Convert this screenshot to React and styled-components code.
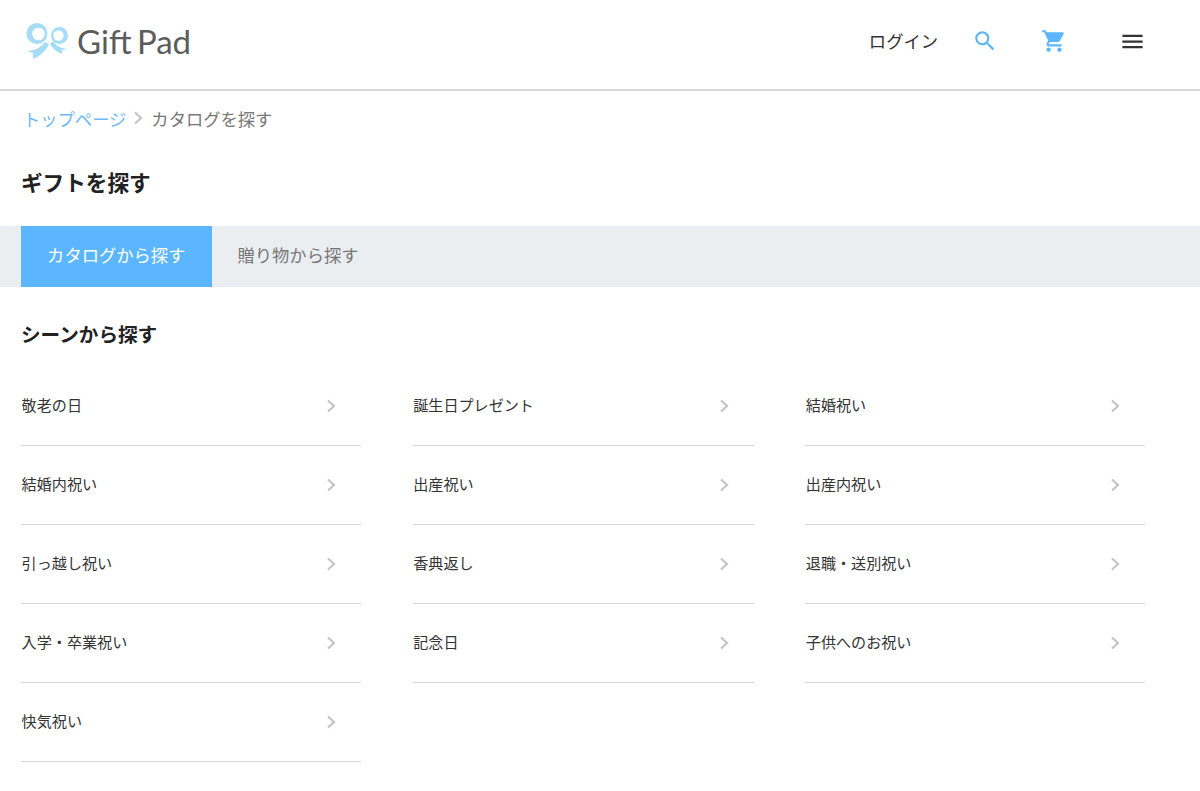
import React from 'react';
import styled, { createGlobalStyle } from 'styled-components';

const GlobalStyle = createGlobalStyle`
  html, body { margin: 0; padding: 0; background: #fff; }
  body { font-family: "Noto Sans CJK JP", "Liberation Sans", sans-serif; color: #333; }
`;

const scenes = [
  '敬老の日', '誕生日プレゼント', '結婚祝い',
  '結婚内祝い', '出産祝い', '出産内祝い',
  '引っ越し祝い', '香典返し', '退職・送別祝い',
  '入学・卒業祝い', '記念日', '子供へのお祝い',
  '快気祝い',
];

const Logo = () => (
  <LogoWrap>
    <svg width="44" height="38" viewBox="26 22 44 38" fill="#a5dcf7">
      <path
        fillRule="evenodd"
        d="M26.5 33.5a10.5 10.5 0 1 0 21 0a10.5 10.5 0 1 0 -21 0Z M32.2 34a6.3 6.3 0 1 0 12.6 0a6.3 6.3 0 1 0 -12.6 0Z"
      />
      <path
        fillRule="evenodd"
        d="M51 35.5a8.5 8.5 0 1 0 17 0a8.5 8.5 0 1 0 -17 0Z M53.3 35.5a5.2 5.2 0 1 0 10.4 0a5.2 5.2 0 1 0 -10.4 0Z"
      />
      <path d="M45 42 L49 44 C46 51 40 56 33 59 L33 53 L27 51 C35 51 41 47 45 42Z" />
      <path d="M52 42 L50 44 C53 49 57 52 62 54 L62 50 L67 49 C61 48 56 46 54 42Z" />
    </svg>
    <LogoText>Gift Pad</LogoText>
  </LogoWrap>
);

const Chevron = () => (
  <ChevronIcon width="10" height="14" viewBox="0 0 10 14" fill="none">
    <path d="M2 1.5 L8 7 L2 12.5" stroke="#c4c4c4" strokeWidth="2.2" />
  </ChevronIcon>
);

const App = () => (
  <>
    <GlobalStyle />
    <Header>
      <Logo />
      <Nav>
        <LoginLink>ログイン</LoginLink>
        <IconButton $w={70}>
          <svg width="26" height="26" viewBox="0 0 24 24" fill="#5cb6ff">
            <path d="M15.5 14h-.79l-.28-.27A6.47 6.47 0 0 0 16 9.5 6.5 6.5 0 1 0 9.5 16c1.61 0 3.09-.59 4.23-1.57l.27.28v.79l5 4.99L20.49 19l-4.99-5zm-6 0C7.01 14 5 11.99 5 9.5S7.01 5 9.5 5 14 7.01 14 9.5 11.99 14 9.5 14z" />
          </svg>
        </IconButton>
        <IconButton $w={68}>
          <svg width="26" height="26" viewBox="0 0 24 24" fill="#5cb6ff">
            <path d="M7 18c-1.1 0-1.99.9-1.99 2S5.9 22 7 22s2-.9 2-2-.9-2-2-2zM1 2v2h2l3.6 7.59-1.35 2.45c-.16.28-.25.61-.25.96 0 1.1.9 2 2 2h12v-2H7.42c-.14 0-.25-.11-.25-.25l.03-.12.9-1.63h7.45c.75 0 1.41-.41 1.75-1.03l3.58-6.49A1 1 0 0 0 20.01 4H5.21l-.94-2H1zm16 16c-1.1 0-1.99.9-1.99 2s.89 2 1.99 2 2-.9 2-2-.9-2-2-2z" />
          </svg>
        </IconButton>
        <IconButton $w={88}>
          <MenuIcon width="27" height="27" viewBox="0 0 24 24" fill="#333">
            <path d="M3 18h18v-2H3v2zm0-5h18v-2H3v2zm0-7v2h18V6H3z" />
          </MenuIcon>
        </IconButton>
      </Nav>
    </Header>
    <Main>
      <Breadcrumb>
        <CrumbLink>トップページ</CrumbLink>
        <Chevron />
        <CrumbCurrent>カタログを探す</CrumbCurrent>
      </Breadcrumb>
      <PageTitle>ギフトを探す</PageTitle>
      <TabBar>
        <Tab $active>カタログから探す</Tab>
        <Tab>贈り物から探す</Tab>
      </TabBar>
      <SectionTitle>シーンから探す</SectionTitle>
      <SceneGrid>
        {scenes.map((s) => (
          <SceneItem key={s}>
            <SceneLabel>{s}</SceneLabel>
            <Chevron />
          </SceneItem>
        ))}
      </SceneGrid>
    </Main>
  </>
);

export default App;

const Header = styled.header`
  height: 81px;
  box-sizing: content-box;
  display: flex;
  align-items: center;
  justify-content: space-between;
  padding: 0 24px 8px 26px;
  border-bottom: 2px solid #d9d9d9;
`;

const LogoWrap = styled.div`
  display: flex;
  align-items: center;
  gap: 7px;
`;

const LogoText = styled.span`
  font-family: Lato, "Liberation Sans", sans-serif;
  font-size: 33px;
  font-weight: 400;
  color: #5c5c5c;
  line-height: 38px;
  word-spacing: -3px;
`;

const Nav = styled.nav`
  display: flex;
  align-items: center;
`;

const LoginLink = styled.a`
  font-size: 17.3px;
  color: #333;
  margin-right: 12px;
`;

const IconButton = styled.button`
  width: ${(p) => p.$w}px;
  border: 0;
  padding: 0;
  background: none;
  display: flex;
  align-items: center;
  justify-content: center;
`;

const MenuIcon = styled.svg`
  margin-top: 1px;
`;

const Main = styled.main`
  padding: 0 21px;
`;

const Breadcrumb = styled.div`
  height: 54px;
  display: flex;
  align-items: center;
  gap: 7px;
  padding-left: 2px;
  font-size: 17.3px;
  color: #777;
`;

const CrumbLink = styled.a`
  color: #6db9f9;
`;

const CrumbCurrent = styled.span`
  margin-left: 1px;
`;

const ChevronIcon = styled.svg`
  flex: none;
`;

const PageTitle = styled.h1`
  margin: 19px 0 0;
  font-size: 21.6px;
  line-height: 36px;
  font-weight: 700;
  color: #222;
`;

const TabBar = styled.div`
  margin: 26px -21px 0;
  padding-left: 21px;
  height: 61px;
  display: flex;
  background: #ebeef1;
`;

const Tab = styled.div`
  width: ${(p) => (p.$active ? '190.5px' : 'auto')};
  padding: 0 0 4px ${(p) => (p.$active ? 0 : 26)}px;
  box-sizing: border-box;
  display: flex;
  align-items: center;
  justify-content: ${(p) => (p.$active ? 'center' : 'flex-start')};
  font-size: 17.3px;
  background: ${(p) => (p.$active ? '#5cb6ff' : 'transparent')};
  color: ${(p) => (p.$active ? '#fff' : '#777')};
`;

const SectionTitle = styled.h2`
  margin: 29px 0 0;
  font-size: 19.6px;
  line-height: 36px;
  font-weight: 700;
  color: #222;
`;

const SceneGrid = styled.div`
  margin-top: 15px;
  display: grid;
  grid-template-columns: 340px 341px 340px;
  column-gap: 51.6px;
  grid-auto-rows: 79px;
`;

const SceneItem = styled.a`
  display: flex;
  align-items: center;
  justify-content: space-between;
  padding-right: 25px;
  box-sizing: border-box;
  border-bottom: 1px solid #d5d5d5;
  font-size: 15.1px;
  color: #333;
`;

const SceneLabel = styled.span`
  padding: 0 0 4px 0.6px;
`;
